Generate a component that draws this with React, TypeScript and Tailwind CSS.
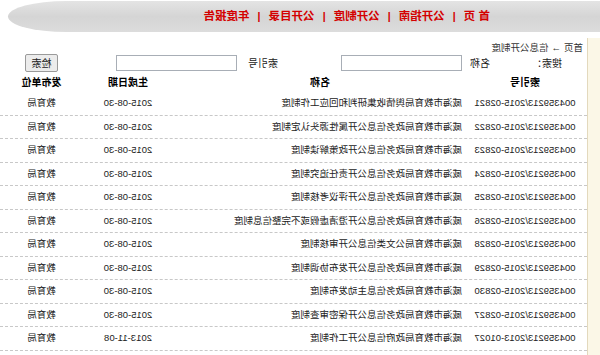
const NAV = ["首 页", "公开指南", "公开制度", "公开目录", "年度报告"];

const ROWS = [
  ["004359213/2015-02821", "威海市教育局舆情收集研判和回应工作制度", "2015-08-30"],
  ["004359213/2015-02822", "威海市教育局政务信息公开属性源头认定制度", "2015-08-30"],
  ["004359213/2015-02823", "威海市教育局政务信息公开政策解读制度", "2015-08-30"],
  ["004359213/2015-02824", "威海市教育局政务信息公开责任追究制度", "2015-08-30"],
  ["004359213/2015-02825", "威海市教育局政务信息公开评议考核制度", "2015-08-30"],
  ["004359213/2015-02826", "威海市教育局政务信息公开澄清虚假或不完整信息制度", "2015-08-30"],
  ["004359213/2015-02828", "威海市教育局公文类信息公开审核制度", "2015-08-30"],
  ["004359213/2015-02829", "威海市教育局政务信息公开发布协调制度", "2015-08-30"],
  ["004359213/2015-02830", "威海市教育局政务信息主动发布制度", "2015-08-30"],
  ["004359213/2015-02827", "威海市教育局政务信息公开保密审查制度", "2015-08-30"],
  ["004359213/2013-01027", "威海市教育局政府信息公开工作制度", "2013-11-08"],
];

function TopNav() {
  return (
    <header className="h-[38px] pt-[1px]">
      <div className="flex h-[31px] w-[592px] items-center rounded-r-[60px_16px] bg-gradient-to-b from-[#e4e4e4] via-[#d5d5d5] to-[#dcdcdc] pl-[110px]">
        {NAV.map((item, i) => (
          <div key={item} className="flex items-center">
            {i > 0 && <span className="px-[8px] text-[11px] font-bold text-[#d40000]">|</span>}
            <span className="whitespace-pre text-[11.5px] font-bold text-[#d40000]">{item}</span>
          </div>
        ))}
      </div>
    </header>
  );
}

function SearchBar() {
  return (
    <div className="flex h-[18px] items-center text-[10px] text-[#222]">
      <span className="ml-[25px] w-[72px]">搜索：</span>
      <span className="w-[28px]">名称</span>
      <div className="h-[16px] w-[121px] border border-[#a8aeb6] bg-white" />
      <span className="ml-[63px] w-[41px]">索引号</span>
      <div className="h-[16px] w-[121px] border border-[#a8aeb6] bg-white" />
      <button className="ml-[58px] flex h-[18px] w-[33px] items-center justify-center rounded-[2px] border border-[#9a9a9a] bg-[#ececec] text-[10px]">
        检索
      </button>
    </div>
  );
}

export default function App() {
  return (
    <div
      className="h-[355px] w-[600px] -scale-x-100 overflow-hidden bg-white"
      style={{ fontFamily: '"Liberation Sans", "Noto Sans CJK SC", sans-serif' }}
    >
      <TopNav />
      <div className="flex h-[317px]">
        <aside className="w-[13px] border-r border-[#e3d9bd] bg-[#fbf7e7]" />
        <main className="flex-1">
          <div className="flex h-[16px] items-center gap-[3px] pl-[4px] pt-[4px] text-[9.5px] text-[#333]">
            <span>首页</span>
            <span>→</span>
            <span>信息公开制度</span>
          </div>
          <SearchBar />
          <div className="grid h-[20px] grid-cols-[124px_286px_98px_1fr] items-center text-[10px] font-bold text-black">
            <span className="text-center">索引号</span>
            <span className="text-center">名称</span>
            <span className="text-center">生成日期</span>
            <span className="pr-[4px] text-center">发布单位</span>
          </div>
          {ROWS.map(([idx, name, date]) => (
            <div
              key={idx}
              className="grid h-[23.5px] grid-cols-[124px_286px_98px_1fr] items-center border-b border-dashed border-[#c8c8c8] text-[9.5px] text-[#222]"
            >
              <span className="text-center">{idx}</span>
              <span className="whitespace-nowrap pl-[1px]">{name}</span>
              <span className="text-center">{date}</span>
              <span className="pr-[4px] text-center">教育局</span>
            </div>
          ))}
        </main>
      </div>
    </div>
  );
}
